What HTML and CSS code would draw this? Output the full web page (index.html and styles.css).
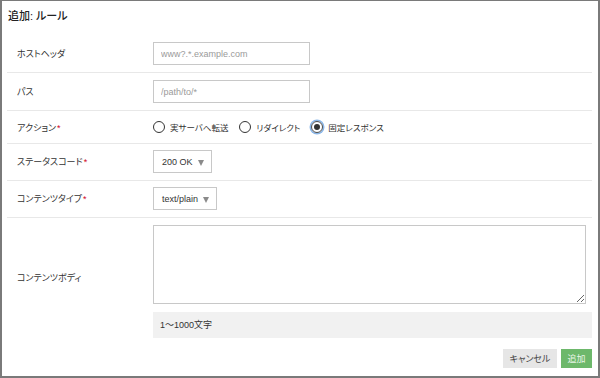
FILE: index.html
```html
<!DOCTYPE html>
<html lang="ja">
<head>
  <meta charset="UTF-8">
  <title>追加: ルール</title>
  <link rel="stylesheet" href="styles.css">
</head>
<body>

<div class="dialog">
  <div class="dialog-title">追加: ルール</div>

  <div class="form">
    <div class="row">
      <div class="label">ホストヘッダ</div>
      <div class="field"><input class="text-input" type="text" placeholder="www?.*.example.com"></div>
    </div>

    <div class="row">
      <div class="label">パス</div>
      <div class="field"><input class="text-input" type="text" placeholder="/path/to/*"></div>
    </div>

    <div class="row short">
      <div class="label">アクション<span class="req">*</span></div>
      <div class="field radios">
        <label class="radio"><span class="circle"></span>実サーバへ転送</label>
        <label class="radio"><span class="circle"></span>リダイレクト</label>
        <label class="radio checked"><span class="circle"></span>固定レスポンス</label>
      </div>
    </div>

    <div class="row compact">
      <div class="label">ステータスコード<span class="req">*</span></div>
      <div class="field"><div class="select">200 OK <span class="caret"></span></div></div>
    </div>

    <div class="row compact">
      <div class="label">コンテンツタイプ<span class="req">*</span></div>
      <div class="field"><div class="select">text/plain <span class="caret"></span></div></div>
    </div>

    <div class="row last">
      <div class="label">コンテンツボディ</div>
      <div class="field">
        <textarea class="textarea"></textarea>
        <div class="help">1〜1000文字</div>
      </div>
    </div>
  </div>

  <div class="footer">
    <button class="btn cancel">キャンセル</button>
    <button class="btn primary">追加</button>
  </div>
</div>

</body>
</html>
```

FILE: styles.css
```css
body {
  margin: 0;
  background: #fff;
  font-family: 'Liberation Sans', 'Noto Sans CJK JP', sans-serif;
  font-feature-settings: 'palt';
  font-size: 9px;
  color: #333;
}

.dialog {
  box-sizing: border-box;
  width: 600px;
  height: 378px;
  border: 2px solid #7a7a7a;
  border-top-width: 1px;
  background: #fff;
}

.dialog-title {
  height: 34px;
  padding: 8px 6px 0;
  box-sizing: border-box;
  font-size: 11px;
  line-height: 14px;
  font-weight: 500;
  color: #222;
}

.form {
  padding: 0 6px 0 5px;
}

.row {
  display: grid;
  grid-template-columns: 146px 1fr;
  align-items: center;
  padding: 7px 0;
  min-height: 23px;
  border-bottom: 1px solid #e8e8e8;
}

.row.short {
  min-height: 18px;
}

.row.compact {
  padding: 6px 0 7px;
}

.row.last {
  border-bottom: none;
  padding-bottom: 6px;
}

.row.last .label {
  margin-bottom: 8px;
}

.label {
  padding-left: 10px;
  color: #333;
}

.req {
  color: #d0021b;
  margin-left: 1px;
}

.text-input {
  display: block;
  box-sizing: border-box;
  width: 157px;
  height: 23px;
  border: 1px solid #c8c8c8;
  padding: 0 7px;
  font-family: inherit;
  font-size: 9px;
  color: #333;
  outline: none;
}

.text-input::placeholder {
  color: #9a9a9a;
}

.radios {
  display: flex;
  align-items: center;
  gap: 11px;
  height: 18px;
}

.radio {
  display: flex;
  align-items: center;
  gap: 5px;
  font-size: 8.5px;
  color: #333;
}

.circle {
  box-sizing: border-box;
  width: 12px;
  height: 12px;
  border: 1px solid #333;
  border-radius: 50%;
  position: relative;
}

.radio.checked .circle {
  border-color: #4a4a4a;
  box-shadow: 0 0 0 1.5px #8ab6e8;
}

.radio.checked .circle::after {
  content: '';
  position: absolute;
  top: 2px;
  left: 2px;
  width: 6px;
  height: 6px;
  border-radius: 50%;
  background: #333;
}

.select {
  display: inline-flex;
  align-items: center;
  vertical-align: top;
  box-sizing: border-box;
  height: 23px;
  padding: 0 7px 0 8px;
  border: 1px solid #c8c8c8;
  color: #333;
}

.caret {
  width: 0;
  height: 0;
  margin-left: 5px;
  margin-top: 2px;
  border-left: 3.5px solid transparent;
  border-right: 3.5px solid transparent;
  border-top: 6px solid #8a8a8a;
}

.textarea {
  display: block;
  box-sizing: border-box;
  width: 433px;
  height: 79px;
  margin: 0;
  border: 1px solid #c8c8c8;
  resize: vertical;
  font-family: inherit;
}

.help {
  margin-top: 8px;
  height: 26px;
  line-height: 26px;
  padding: 0 7px;
  background: #f1f1f1;
  color: #333;
}

.footer {
  display: flex;
  justify-content: flex-end;
  gap: 4px;
  padding: 5px 6px 0 0;
}

.btn {
  height: 19px;
  border: none;
  font-family: inherit;
  font-feature-settings: 'palt';
  font-size: 9px;
  padding: 0;
  white-space: nowrap;
  cursor: pointer;
}

.btn.cancel {
  width: 54px;
  background: #e6e6e6;
  color: #444;
}

.btn.primary {
  width: 31px;
  background: #6db86b;
  color: #e8f5e6;
}
```
